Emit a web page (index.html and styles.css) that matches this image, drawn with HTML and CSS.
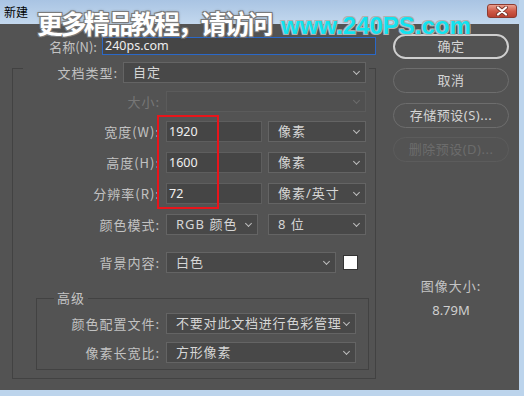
FILE: index.html
```html
<!DOCTYPE html>
<html lang="zh-CN">
<head>
    <meta charset="UTF-8">
    <meta name="viewport" content="width=device-width, initial-scale=1.0">
    <title>新建</title>
    <link rel="stylesheet" href="styles.css">
</head>
<body>
    <div class="window">
        <div class="titlebar"> <!-- 标题栏 -->
            <span class="title">新建</span>
            <span class="close">
                <svg width="14" height="10" viewBox="0 0 14 10">
                    <path d="M3 1.5 L11 8.5 M11 1.5 L3 8.5" stroke="#7a3a30" stroke-width="4" stroke-linecap="round"/>
                    <path d="M3 1.5 L11 8.5 M11 1.5 L3 8.5" stroke="#fff" stroke-width="2.2" stroke-linecap="round"/>
                </svg>
            </span>
        </div>
        <div class="client">
            <div class="form">
                <div class="name-row">
                    <span class="lbl name-lbl">名称(N):</span>
                    <div class="name-input">240ps.com</div>
                </div>
                <fieldset class="group preset">
                    <legend class="preset-legend">
                        <span class="lbl doc-lbl">文档类型:</span>
                        <div class="select doc-sel">自定</div>
                    </legend>
                    <div class="row first">
                        <span class="lbl off">大小:</span>
                        <div class="select off w200"></div>
                    </div>
                    <div class="row">
                        <span class="lbl">宽度(W):</span>
                        <div class="field">1920</div>
                        <div class="select unit">像素</div>
                    </div>
                    <div class="row">
                        <span class="lbl">高度(H):</span>
                        <div class="field">1600</div>
                        <div class="select unit">像素</div>
                    </div>
                    <div class="row">
                        <span class="lbl">分辨率(R):</span>
                        <div class="field">72</div>
                        <div class="select unit">像素/英寸</div>
                    </div>
                    <div class="row">
                        <span class="lbl">颜色模式:</span>
                        <div class="select mode">RGB 颜色</div>
                        <div class="select unit bits">8 位</div>
                    </div>
                    <div class="row bg-row">
                        <span class="lbl">背景内容:</span>
                        <div class="select bg">白色</div>
                        <span class="swatch"></span>
                    </div>
                    <fieldset class="group advanced"> <!-- 高级 -->
                        <legend class="adv-legend">高级</legend>
                        <div class="row adv-first">
                            <span class="lbl adv-lbl">颜色配置文件:</span>
                            <div class="select adv-sel">不要对此文档进行色彩管理</div>
                        </div>
                        <div class="row">
                            <span class="lbl adv-lbl">像素长宽比:</span>
                            <div class="select adv-sel">方形像素</div>
                        </div>
                    </fieldset>
                </fieldset>
            </div>
            <div class="side">
                <div class="btn default">确定</div>
                <div class="btn">取消</div>
                <div class="btn">存储预设(S)...</div>
                <div class="btn disabled">删除预设(D)...</div>
                <div class="img-size">
                    <div class="img-size-lbl">图像大小:</div>
                    <div class="img-size-val">8.79M</div>
                </div>
            </div>
        </div>
        <!-- 覆盖在上面的水印和红框 -->
        <div class="watermark"><span class="wm-cn">更多精品教程，请访问</span><span class="wm-url">www.240PS.com</span></div>
        <div class="redbox"></div>
    </div>
</body>
</html>
```
FILE: styles.css
```css
*{padding:0;margin:0;box-sizing:border-box;}
body{background:#bcd4ec;font-family:"Noto Sans","Noto Sans CJK SC",sans-serif;font-size:13px;color:#c4c4c4;}
.window{width:519px;height:390px;position:relative;}

/* 标题栏 */
.titlebar{height:24px;display:flex;justify-content:space-between;align-items:flex-start;background:linear-gradient(#a9c4e3,#c3d8ee);padding-left:4px;}
.title{color:#000;font-size:12px;line-height:24px;font-family:"Noto Sans CJK SC",sans-serif;}
.close{width:30px;height:14px;margin:4px 2px 0 0;border:1px solid #8d3b30;border-radius:3px;background:linear-gradient(#e9a08f,#cf5a47 50%,#b8402f);display:flex;align-items:center;justify-content:center;}

.client{height:366px;background:#535353;display:flex;}
.form{width:376px;padding:13px 0 0 12px;}

.lbl{text-align:right;letter-spacing:1px;white-space:nowrap;color:#c2c2c2;font-family:"Noto Sans CJK SC",sans-serif;}
.lbl.off{color:#777;}

.name-row{display:flex;align-items:center;height:18px;}
.name-lbl{width:85px;letter-spacing:0;}
.name-input{width:274px;height:18px;margin-left:5px;border:1px solid #2a68c8;background:#454545;color:#eee;font-size:12.5px;line-height:16px;padding-left:2px;}

/* 分组框 */
.group{border:1px solid #424242;min-width:0;}
.preset{width:364px;margin-top:7px;padding:0;height:317px;}
.preset-legend{height:12px;margin-left:10px;width:346px;display:flex;align-items:flex-start;padding:0;}
.doc-lbl{width:95px;line-height:21px;}
.doc-sel{width:243px;margin-left:5px;}

.select{height:21px;border:1px solid #646464;background:#484848;color:#d6d6d6;line-height:19px;padding-left:9px;letter-spacing:1px;position:relative;font-family:"Noto Sans","Noto Sans CJK SC",sans-serif;white-space:nowrap;}
.select::after{content:"";position:absolute;right:6px;top:6px;width:4px;height:4px;border-right:1px solid #bdbdbd;border-bottom:1px solid #bdbdbd;transform:rotate(45deg);}
.select.off{background:#505050;border-color:#5b5b5b;}
.select.off::after{border-color:#6c6c6c;}

.row{display:flex;align-items:center;height:21px;margin-top:10px;}
.row.first{margin-top:17px;}
.row.first+.row{margin-top:9px;}
.row .lbl{width:147px;margin-right:6px;}
.w200{width:200px;}
.field{width:96px;height:21px;border:1px solid #5e5e5e;background:#454545;color:#f0f0f0;font-size:12.5px;line-height:19px;padding-left:2px;}
.unit{width:98px;margin-left:6px;}
.mode{width:92px;}
.bits{margin-left:10px;}
.bg-row{margin-top:17px;}
.bg{width:170px;}
.swatch{width:15px;height:15px;margin-left:7px;background:#fff;border:1px solid #333;}

/* 高级 */
.advanced{width:333px;margin:17px 0 0 23px;padding:0 0 6px;}
.adv-legend{margin-left:17px;padding:0 3px;line-height:16px;letter-spacing:1px;color:#c4c4c4;font-family:"Noto Sans CJK SC",sans-serif;}
.advanced .row{margin-top:8px;}
.advanced .row.adv-first{margin-top:7px;}
.advanced .row .lbl{width:123px;}
.adv-sel{width:190px;letter-spacing:0.8px;}

/* 右侧按钮 */
.side{width:116px;margin-left:17px;padding-top:10px;}
.btn{height:25px;border:1px solid #6d6d6d;border-radius:13px;text-align:center;line-height:23px;color:#d4d4d4;letter-spacing:0.5px;margin-bottom:9px;font-family:"Noto Sans","Noto Sans CJK SC",sans-serif;}
.btn.default{border:2px solid #cfcfcf;line-height:21px;}
.btn:nth-child(2){margin-bottom:10px;}
.btn.disabled{color:#6c6c6c;border-color:#5c5c5c;}
.img-size{margin-top:111px;text-align:center;line-height:25px;}
.img-size-lbl{letter-spacing:1px;font-family:"Noto Sans CJK SC",sans-serif;}
.img-size-val{color:#cfcfcf;}

/* 水印 */
.watermark{position:absolute;left:37px;top:8px;font-weight:bold;line-height:30px;white-space:nowrap;display:flex;align-items:baseline;}
.wm-cn{font-size:26px;color:#fff;font-family:"Noto Sans CJK SC",sans-serif;letter-spacing:-2.6px;text-shadow:1px 1px 0 #7a7a7a,-1px -1px 0 #7a7a7a,1px -1px 0 #7a7a7a,-1px 1px 0 #7a7a7a,0 0 3px #555;}
.wm-url{font-size:24px;margin-left:10px;color:#12e3f0;font-family:"Liberation Sans",Arial,sans-serif;text-shadow:1px 1px 0 #b0b0b0,-1px -1px 0 #b0b0b0,1px -1px 0 #b0b0b0,-1px 1px 0 #b0b0b0;}

.redbox{position:absolute;left:157px;top:115px;width:62px;height:94px;border:2px solid #e8151b;}
```
